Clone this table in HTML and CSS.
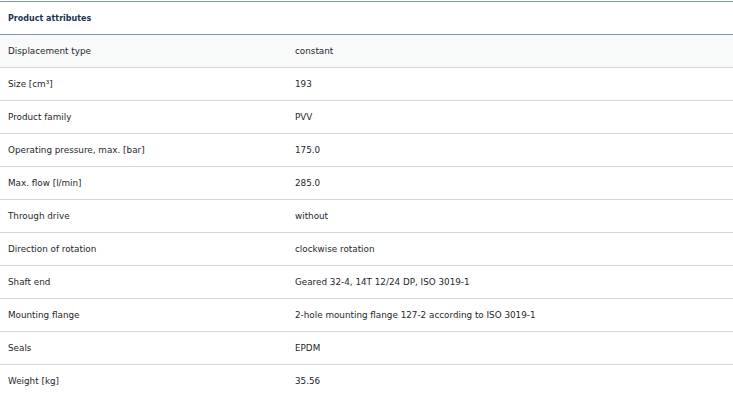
FILE: index.html
```html
<!DOCTYPE html>
<html lang="en">
<head>
<meta charset="utf-8">
<title>Product attributes</title>
<link rel="stylesheet" href="styles.css">
</head>
<body>
<section class="attrs">
  <div class="attrs-head">Product attributes</div>
  <div class="attr-row attr-row--hover"><div class="k">Displacement type</div><div class="v">constant</div></div>
  <div class="attr-row"><div class="k">Size [cm³]</div><div class="v">193</div></div>
  <div class="attr-row"><div class="k">Product family</div><div class="v">PVV</div></div>
  <div class="attr-row"><div class="k">Operating pressure, max. [bar]</div><div class="v">175.0</div></div>
  <div class="attr-row"><div class="k">Max. flow [l/min]</div><div class="v">285.0</div></div>
  <div class="attr-row"><div class="k">Through drive</div><div class="v">without</div></div>
  <div class="attr-row"><div class="k">Direction of rotation</div><div class="v">clockwise rotation</div></div>
  <div class="attr-row"><div class="k">Shaft end</div><div class="v">Geared 32-4, 14T 12/24 DP, ISO 3019-1</div></div>
  <div class="attr-row"><div class="k">Mounting flange</div><div class="v">2-hole mounting flange 127-2 according to ISO 3019-1</div></div>
  <div class="attr-row"><div class="k">Seals</div><div class="v">EPDM</div></div>
  <div class="attr-row"><div class="k">Weight [kg]</div><div class="v">35.56</div></div>
</section>
</body>
</html>
```
FILE: styles.css
```css
html, body {
  margin: 0;
  padding: 0;
  background: #ffffff;
}
body {
  padding-top: 1px;
  font-family: "DejaVu Sans", Verdana, sans-serif;
  font-size: 8.8px;
  color: #24272b;
}
.attrs {
  border-top: 1px solid #7d97a8;
}
.attrs-head {
  height: 32px;
  display: flex;
  align-items: center;
  padding-left: 8px;
  font-size: 8px;
  font-weight: bold;
  color: #1c3551;
  border-bottom: 1px solid #7d97a8;
}
.attr-row {
  display: grid;
  grid-template-columns: 287px 1fr;
  height: 32px;
  align-items: center;
  border-bottom: 1px solid #d2d9de;
}
.attr-row--hover {
  background: #f8fafa;
}
.k {
  padding-left: 8px;
}
.v {
  padding-left: 8px;
}
```
